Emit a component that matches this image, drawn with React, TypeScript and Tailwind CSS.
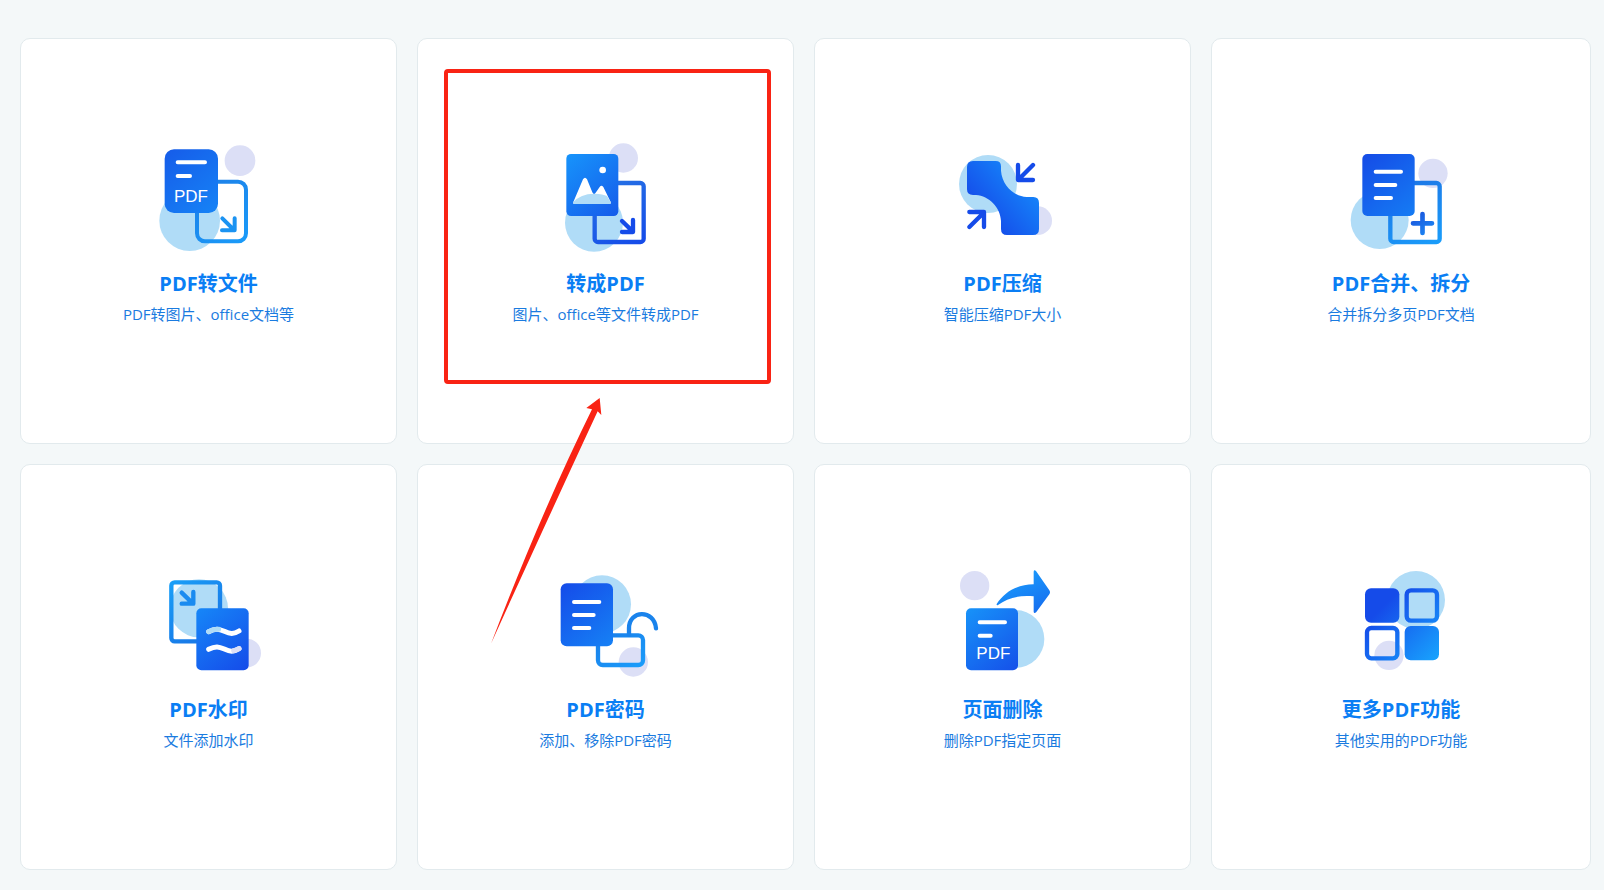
import React from 'react'
import clsx from 'clsx'

const SKY = '#b0dcf7'
const LILAC = '#dcdff6'
const DEEP = '#154be9'
const BRIGHT = '#1a9cfa'

type GradientProps = {
  id: string
  from: string
  to: string
  // x1, y1, x2, y2 in the drawing's own units
  at: [number, number, number, number]
}

function Gradient({ id, from, to, at }: GradientProps) {
  return (
    <linearGradient id={id} gradientUnits="userSpaceOnUse" x1={at[0]} y1={at[1]} x2={at[2]} y2={at[3]}>
      <stop offset="0" stopColor={from} />
      <stop offset="1" stopColor={to} />
    </linearGradient>
  )
}

function Icon({ viewBox, children }: { viewBox: string; children: React.ReactNode }) {
  return (
    <svg viewBox={viewBox} className="size-[120px]" fill="none" strokeLinecap="round" strokeLinejoin="round" aria-hidden="true">
      {children}
    </svg>
  )
}

function ToFileIcon() {
  return (
    <Icon viewBox="147 30 360 360">
      <Gradient id="file-a" from="#165ce9" to="#1683f6" at={[194, 58, 354, 248]} />
      <Gradient id="file-b" from="#1d7de6" to={BRIGHT} at={[286, 150, 444, 340]} />
      <circle cx="420" cy="92" r="46" fill={LILAC} />
      <circle cx="269" cy="272" r="91" fill={SKY} />
      <rect x="291" y="155" width="147" height="179" rx="24" stroke="url(#file-b)" strokeWidth="12" />
      <path d="M367 265L402 300M404 265V301H366" stroke="#1b93f2" strokeWidth="12" />
      <rect x="194" y="58" width="160" height="191" rx="28" fill="url(#file-a)" />
      <path d="M233 97H315M233 138H270" stroke="#fff" strokeWidth="12" />
      <text x="222" y="216" fontSize="51" fill="#fff" fontFamily="Liberation Sans, sans-serif">PDF</text>
    </Icon>
  )
}

function ToPdfIcon() {
  return (
    <Icon viewBox="138 30 360 360">
      <Gradient id="topdf-a" from="#1794fb" to="#155bea" at={[199, 72, 355, 258]} />
      <Gradient id="topdf-b" from="#2672e4" to={DEEP} at={[320, 153, 420, 342]} />
      <circle cx="370" cy="84" r="44" fill={LILAC} />
      <circle cx="282" cy="278" r="87" fill={SKY} />
      <rect x="284" y="159" width="147" height="177" rx="10" stroke="url(#topdf-b)" strokeWidth="13" />
      <path d="M366 273L398 304M399 270V306H366" stroke={DEEP} strokeWidth="13" />
      <rect x="199" y="72" width="156" height="186" rx="14" fill="url(#topdf-a)" />
      <circle cx="308" cy="120" r="10" fill="#fff" />
      <path d="M220 216L249 148Q255 139 261 148L277 187Q282 198 288 187L299 171Q304 164 310 171L332 216Q334 222 329 222H222Q218 221 220 216Z" fill="#fff" />
      <path d="M219 217Q242 191 282 191Q310 192 321 198L332 216Q334 222 329 222H222Q218 221 219 217Z" fill={SKY} />
    </Icon>
  )
}

function CompressIcon() {
  return (
    <Icon viewBox="129 30 360 360">
      <Gradient id="zip-a" from={DEEP} to="#1582f9" at={[240, 260, 370, 150]} />
      <circle cx="264" cy="162" r="87" fill={SKY} />
      <circle cx="413" cy="272" r="43" fill={LILAC} />
      <path
        d="M219 93H287Q303 93 303 109V122C306 164 340 199 380 201H400Q417 201 417 219V297Q417 315 399 315H321Q303 315 303 297V273C301 232 267 198 228 195H219Q201 195 201 178V111Q201 93 219 93Z"
        fill="url(#zip-a)"
      />
      <path d="M399 105L355 149M354 105V150H399" stroke={DEEP} strokeWidth="13" />
      <path d="M208 291L251 248M208 246H252V291" stroke={DEEP} strokeWidth="13" />
    </Icon>
  )
}

function MergeIcon() {
  return (
    <Icon viewBox="123 30 360 360">
      <Gradient id="merge-a" from="#154be6" to="#157cf4" at={[187, 72, 343, 258]} />
      <Gradient id="merge-b" from="#1d74e4" to={BRIGHT} at={[300, 153, 400, 342]} />
      <Gradient id="merge-c" from="#1b55dc" to="#1a86f4" at={[345, 250, 390, 310]} />
      <circle cx="239" cy="270" r="87" fill={SKY} />
      <circle cx="399" cy="130" r="44" fill={LILAC} />
      <rect x="271" y="159" width="148" height="177" rx="10" stroke="url(#merge-b)" strokeWidth="13" />
      <path d="M339 280H396M367.5 252V309" stroke="url(#merge-c)" strokeWidth="14" />
      <rect x="187" y="72" width="157" height="186" rx="15" fill="url(#merge-a)" />
      <path d="M227 125H303M227 165H286M227 204H273" stroke="#fff" strokeWidth="12" />
    </Icon>
  )
}

function WatermarkIcon() {
  return (
    <Icon viewBox="147 20 360 360">
      <Gradient id="mark-a" from="#1687f8" to={DEEP} at={[289, 147, 446, 333]} />
      <Gradient id="mark-b" from="#1aa0f8" to="#187be8" at={[208, 63, 320, 200]} />
      <circle cx="297" cy="147" r="87" fill={SKY} />
      <circle cx="440" cy="281" r="43" fill={LILAC} />
      <rect x="214" y="69" width="146" height="177" rx="10" stroke="url(#mark-b)" strokeWidth="13" />
      <path d="M245 100L278 132M280 98V133H245" stroke="#1a8bf0" strokeWidth="13" />
      <rect x="289" y="147" width="157" height="186" rx="15" fill="url(#mark-a)" />
      <path d="M326 217C347 206 357 209 373 216C390 224 400 226 417 215" stroke="#fff" strokeWidth="15" />
      <path d="M326 217C338 210 347 209 356 210" stroke={SKY} strokeWidth="15" />
      <path d="M326 270C347 259 357 262 373 269C390 277 400 279 417 268" stroke="#fff" strokeWidth="15" />
      <path d="M401 274Q409 273 417 268" stroke={LILAC} strokeWidth="15" />
    </Icon>
  )
}

function PasswordIcon() {
  return (
    <Icon viewBox="138 20 360 360">
      <Gradient id="lock-a" from={DEEP} to="#1681f5" at={[182, 72, 338, 261]} />
      <Gradient id="lock-b" from="#1a7de9" to={BRIGHT} at={[330, 200, 410, 330]} />
      <circle cx="306" cy="135" r="87" fill={SKY} />
      <circle cx="400" cy="308" r="44" fill={LILAC} />
      <rect x="294" y="228" width="135" height="89" rx="14" stroke="url(#lock-b)" strokeWidth="13" />
      <path d="M387 226V207C387 151 463 150 468 207" stroke="#1a83ec" strokeWidth="13" />
      <rect x="182" y="72" width="157" height="189" rx="18" fill="url(#lock-a)" />
      <path d="M222 128H298M222 167H281M222 206H268" stroke="#fff" strokeWidth="12" />
    </Icon>
  )
}

function DeletePageIcon() {
  return (
    <Icon viewBox="129 20 360 360">
      <Gradient id="del-a" from="#1793f9" to="#1550e9" at={[198, 147, 354, 333]} />
      <Gradient id="del-b" from="#1a98fb" to="#1670f0" at={[350, 50, 400, 160]} />
      <circle cx="224" cy="79" r="44" fill={LILAC} />
      <circle cx="346" cy="239" r="87" fill={SKY} />
      <path
        d="M290 134C314 97 350 76 401 75V37Q402 30 408 35L448 93Q452 99 448 105L409 158Q402 165 401 157V111C357 106 322 117 294 137Q289 139 290 134Z"
        fill="url(#del-b)"
      />
      <rect x="198" y="147" width="156" height="186" rx="15" fill="url(#del-a)" />
      <path d="M239 189H315M239 229H272" stroke="#fff" strokeWidth="12" />
      <text x="229" y="299" fontSize="51" fill="#fff" fontFamily="Liberation Sans, sans-serif">PDF</text>
    </Icon>
  )
}

function MoreIcon() {
  return (
    <Icon viewBox="123 20 360 360">
      <Gradient id="more-a" from={DEEP} to="#18a2fd" at={[250, 140, 410, 300]} />
      <circle cx="348" cy="122" r="87" fill={SKY} />
      <circle cx="267" cy="288" r="44" fill={LILAC} />
      <rect x="195" y="87" width="103" height="103" rx="18" fill="url(#more-a)" />
      <rect x="320" y="93" width="91" height="91" rx="13" stroke="url(#more-a)" strokeWidth="13" />
      <rect x="201" y="206" width="91" height="91" rx="13" stroke="url(#more-a)" strokeWidth="13" />
      <rect x="314" y="200" width="103" height="103" rx="18" fill="url(#more-a)" />
    </Icon>
  )
}

// Red frame and arrow that point the reader at one card
function Callout() {
  return (
    <>
      <span className="pointer-events-none absolute top-[30px] right-[22px] bottom-[59px] left-[26px] rounded border-4 border-[#f92314]" />
      <svg
        viewBox="34 53 333 738"
        className="pointer-events-none absolute top-[359px] left-[73px] z-10 h-[246px] w-[111px]"
        aria-hidden="true"
      >
        <path d="M360 53L320 83L337 87Q183 400 34 790Q206 412 354 93L365 104Z" fill="#f92314" />
      </svg>
    </>
  )
}

const tools = [
  { title: 'PDF转文件', desc: 'PDF转图片、office文档等', icon: ToFileIcon },
  { title: '转成PDF', desc: '图片、office等文件转成PDF', icon: ToPdfIcon, marked: true },
  { title: 'PDF压缩', desc: '智能压缩PDF大小', icon: CompressIcon },
  { title: 'PDF合并、拆分', desc: '合并拆分多页PDF文档', icon: MergeIcon },
  { title: 'PDF水印', desc: '文件添加水印', icon: WatermarkIcon },
  { title: 'PDF密码', desc: '添加、移除PDF密码', icon: PasswordIcon },
  { title: '页面删除', desc: '删除PDF指定页面', icon: DeletePageIcon },
  { title: '更多PDF功能', desc: '其他实用的PDF功能', icon: MoreIcon },
]

export default function App() {
  return (
    <main className="flex min-h-screen flex-col bg-[#f4f8f9] pt-[38px] pr-[13px] pb-5 pl-5 font-['Open_Sans','Noto_Sans_CJK_SC',sans-serif]">
      <div className="grid flex-1 auto-rows-fr grid-cols-[377fr_377fr_377fr_380fr] gap-5">
        {tools.map(({ title, desc, icon: ToolIcon, marked }) => (
          <a
            key={title}
            href="#"
            className={clsx(
              'flex flex-col items-center justify-center rounded-[10px] border border-[#e2eaed] bg-white pb-[18px]',
              marked && 'relative'
            )}
          >
            <ToolIcon />
            <h2 className="mt-3 text-[20px] leading-6 font-bold text-[#0a7ef4]">{title}</h2>
            <p className="mt-2 text-[15px] leading-5 text-[#1a7be0]">{desc}</p>
            {marked && <Callout />}
          </a>
        ))}
      </div>
    </main>
  )
}
